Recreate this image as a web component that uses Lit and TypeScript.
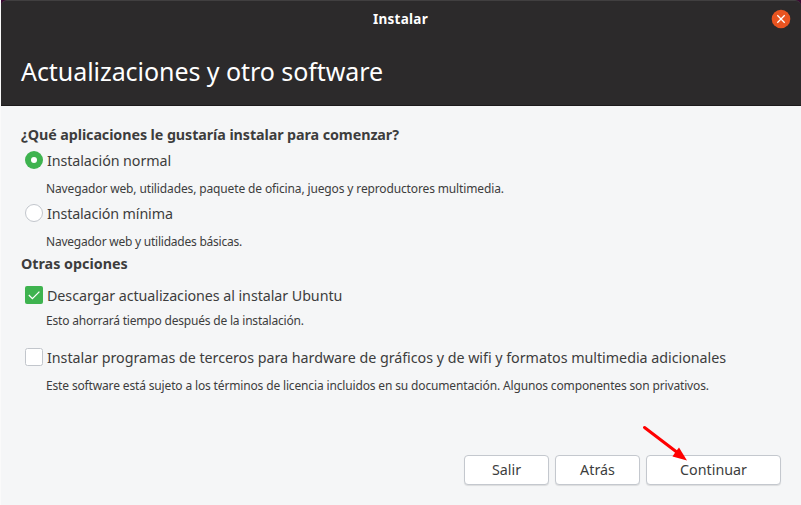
import { LitElement, html, css, svg } from "lit";
import { customElement } from "lit/decorators.js";

const check = svg`<path d="M3.8 9 L7.4 12.6 L14.4 5.6" fill="none" stroke="#fff" stroke-width="1.3"/>`;

@customElement("app-root")
class AppRoot extends LitElement {
  static styles = css`
    :host { display: block; width: 801px; height: 505px; overflow: hidden; background: #fafafa; }
    * { box-sizing: border-box; }
    .window {
      height: 505px; margin-left: 1px; display: flex; flex-direction: column;
      font-family: "Noto Sans", "Open Sans", sans-serif; font-size: 14.3px; color: #3d3d3d; white-space: nowrap;
      background: linear-gradient(#3a0a32 0 20px, #f5f6f7 20px);
    }
    .header {
      height: 106px; background: #2c2a2b; border-top: 1px solid #413f40; border-bottom: 1px solid #1c1a1b;
      border-radius: 6px 6px 0 0; color: #fff; flex: none;
    }
    .bar { display: grid; grid-template-columns: 1fr auto 1fr; height: 36px; align-items: center; padding: 0 10px 0 9px; }
    .name { grid-column: 2; font-weight: 700; font-size: 13.5px; line-height: 20px; letter-spacing: 0.25px; }
    .close { grid-column: 3; justify-self: end; width: 20px; height: 20px; display: block; }
    h1 { margin: 17px 0 0 20px; font-size: 25px; font-weight: 400; line-height: 34px; letter-spacing: -0.06px; }
    .body { background: #f5f6f7; flex: 1; padding: 19px 20px 0; display: flex; flex-direction: column; }
    h2 { margin: 0; font-size: 14.3px; font-weight: 700; line-height: 20px; height: 20px; }
    .row { display: flex; gap: 4px; height: 20px; line-height: 20px; margin-left: 3px; align-items: center; }
    .row svg { width: 20px; height: 20px; flex: none; margin: 0 -1px 2px 0; }
    .hint { height: 20px; line-height: 20px; font-size: 12px; margin-left: 25px; }
    .footer { display: flex; gap: 6px; margin-top: 59px; justify-content: flex-end; }
    button {
      font: inherit; color: inherit; width: 85px; height: 30px; padding: 0 0 2px; background: #fff;
      border: 1px solid #c4c8ce; border-radius: 4px; box-shadow: 0 1px 1px #0000001a;
    }
    .wide { width: 135px; }
    .arrow { position: absolute; left: 640px; top: 422px; width: 52px; height: 42px; }
    .g6 { margin-top: 6px; } .g8 { margin-top: 8px; } .g5 { margin-top: 5px; }
    .g2 { margin-top: 2px; } .g12 { margin-top: 12px; } .g17 { margin-top: 17px; }
    .q { letter-spacing: -0.08px; }
    .o1 { letter-spacing: -0.09px; } .o2 { letter-spacing: -0.13px; }
    .o3 { letter-spacing: -0.07px; } .o4 { letter-spacing: -0.03px; }
    .d1 { letter-spacing: -0.135px; } .d2 { letter-spacing: -0.23px; }
    .d3 { letter-spacing: -0.2px; } .d4 { letter-spacing: -0.15px; }
  `;
  render() {
    return html`
      <div class="window">
        <div class="header">
          <div class="bar">
            <span class="name">Instalar</span>
            <svg class="close" viewBox="0 0 20 20"><circle cx="10" cy="10" r="9.3" fill="#e95420"/><path d="M6.3 6.3 L13.7 13.7 M13.7 6.3 L6.3 13.7" stroke="#fff" stroke-width="1.3"/></svg>
          </div>
          <h1>Actualizaciones y otro software</h1>
        </div>
        <div class="body">
          <h2 class="q">¿Qué aplicaciones le gustaría instalar para comenzar?</h2>
          <div class="row g6"><svg viewBox="-1 -1 20 20"><circle cx="9" cy="9" r="9" fill="#3eb34f"/><circle cx="9" cy="9" r="3" fill="#fff"/></svg><span class="o1">Instalación normal</span></div>
          <div class="hint g8 d1">Navegador web, utilidades, paquete de oficina, juegos y reproductores multimedia.</div>
          <div class="row g5"><svg viewBox="-1 -1 20 20"><circle cx="9" cy="9" r="8.5" fill="#fff" stroke="#c2c6cc"/></svg><span class="o2">Instalación mínima</span></div>
          <div class="hint g8 d2">Navegador web y utilidades básicas.</div>
          <h2 class="g2">Otras opciones</h2>
          <div class="row g12"><svg viewBox="-1 -1 20 20"><rect width="18" height="18" rx="2" fill="#3eb34f"/>${check}</svg><span class="o3">Descargar actualizaciones al instalar Ubuntu</span></div>
          <div class="hint g5 d3">Esto ahorrará tiempo después de la instalación.</div>
          <div class="row g17"><svg viewBox="-1 -1 20 20"><rect x=".5" y=".5" width="17" height="17" rx="2" fill="#fff" stroke="#c2c6cc"/></svg><span class="o4">Instalar programas de terceros para hardware de gráficos y de wifi y formatos multimedia adicionales</span></div>
          <div class="hint g8 d4">Este software está sujeto a los términos de licencia incluidos en su documentación. Algunos componentes son privativos.</div>
          <div class="footer"><button>Salir</button><button>Atrás</button><button class="wide">Continuar</button></div>
        </div>
      </div>
      <svg class="arrow" viewBox="0 0 52 42"><path d="M4.5 5.5 L36 29.5" stroke="#f00" stroke-width="3" stroke-linecap="round"/><path d="M47 38.5 L32.5 34.5 L35.5 30 L39 25.5 Z" fill="#f00"/></svg>
    `;
  }
}
